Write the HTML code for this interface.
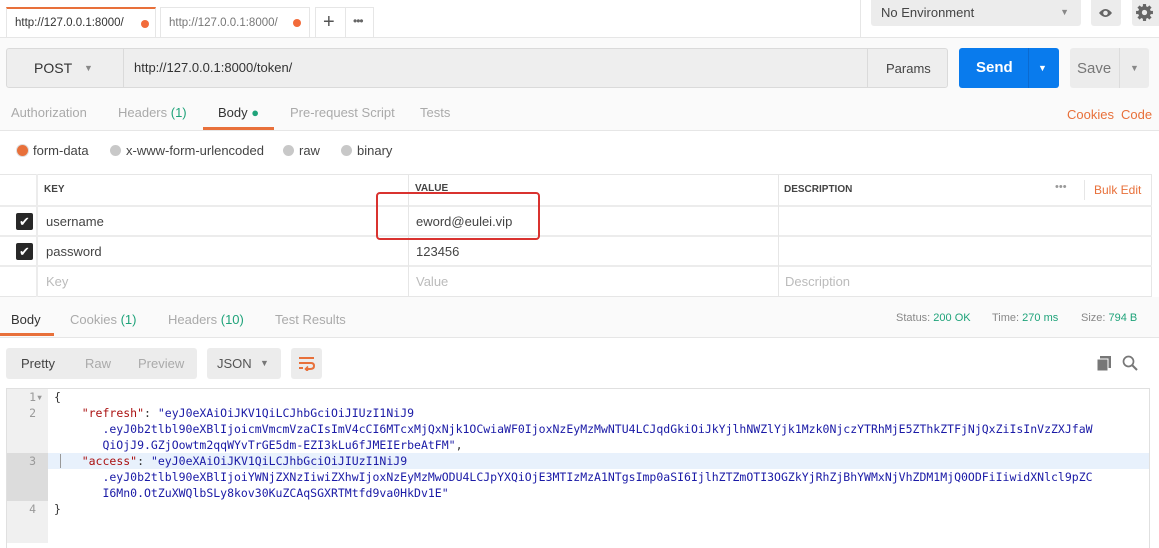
<!DOCTYPE html>
<html><head><meta charset="utf-8"><style>
*{box-sizing:border-box;margin:0;padding:0}
body{width:1159px;height:543px;overflow:hidden;background:#fff;font-family:"Liberation Sans",sans-serif;font-size:13px;color:#505050;position:relative}
.a{position:absolute}
.tab{position:absolute;top:7px;height:31px;border:1px solid #e6e6e6;border-bottom:none;background:#fff;font-size:11.5px;line-height:30px;color:#333}
.tab span.t{position:absolute;left:8px;top:0;width:115px;overflow:hidden;white-space:nowrap}
.dot{position:absolute;width:8px;height:8px;border-radius:50%;background:#f26b3a}
.gray{background:#ececec}
.mono{font-family:"DejaVu Sans Mono",monospace;font-size:11.5px;line-height:16px;white-space:pre}
.o{color:#e8703a}
.g{color:#1fa37a}
.radio{display:inline-block;width:11px;height:11px;border-radius:50%;background:#c8c8c8;vertical-align:-1px;margin-right:5px}
.cb{position:absolute;left:16px;width:17px;height:17px;background:#282828;border-radius:2px;color:#fff;font-size:13px;line-height:17px;text-align:center}
</style></head><body>
<!-- top tabs -->
<div class="tab" style="left:6px;width:150px;border-top:2px solid #e8703a"><span class="t" style="top:-1px">http://127.0.0.1:8000/</span><div class="dot" style="left:134px;top:11px"></div></div>
<div class="tab" style="left:160px;width:150px;color:#777"><span class="t">http://127.0.0.1:8000/</span><div class="dot" style="left:132px;top:11px"></div></div>
<div class="tab" style="left:315px;width:59px"><span class="a" style="left:7px;top:-1px;font-size:20px;color:#555">+</span><div class="a" style="left:29px;top:0;width:1px;height:30px;background:#e6e6e6"></div><span class="a" style="left:37px;top:-2px;font-size:12px;color:#666;letter-spacing:-1px">•••</span></div>
<div class="a" style="left:860px;top:0;width:1px;height:37px;background:#e6e6e6"></div>
<div class="a gray" style="left:871px;top:0;width:210px;height:26px;border-radius:0 0 3px 3px;font-size:13px;line-height:25px;padding-left:10px;color:#444">No Environment<span class="a" style="right:12px;top:0;font-size:9px;color:#888">▼</span></div>
<div class="a gray" style="left:1091px;top:0;width:30px;height:26px;border-radius:0 0 3px 3px"><svg class="a" style="left:7px;top:7px" width="15" height="12" viewBox="0 0 15 12"><path d="M1 6Q7.5-2 14 6Q7.5 14 1 6Z" fill="#666"/><circle cx="7.5" cy="6" r="2.3" fill="#ececec"/></svg></div>
<div class="a gray" style="left:1132px;top:0;width:27px;height:26px;border-radius:0 0 0 3px"><svg class="a" style="left:3px;top:3px" width="19" height="19" viewBox="0 0 18 18"><g fill="#666"><circle cx="9" cy="9" r="6"/><rect x="7.5" y="1" width="3" height="16"/><rect x="1" y="7.5" width="16" height="3"/><rect x="7.5" y="1" width="3" height="16" transform="rotate(45 9 9)"/><rect x="7.5" y="1" width="3" height="16" transform="rotate(-45 9 9)"/></g><circle cx="9" cy="9" r="2.5" fill="#ececec"/></svg></div>
<div class="a" style="left:0;top:37px;width:1159px;height:1px;background:#e6e6e6"></div>
<!-- request area -->
<div class="a" style="left:0;top:38px;width:1159px;height:92px;background:#fafafa"></div>
<div class="a" style="left:6px;top:48px;width:942px;height:40px;background:#eeeeee;border:1px solid #dadada;border-radius:3px"></div>
<div class="a" style="left:123px;top:49px;width:1px;height:38px;background:#dadada"></div>
<div class="a" style="left:34px;top:60px;font-size:14px;color:#333">POST</div>
<div class="a" style="left:84px;top:63px;font-size:9px;color:#888">▼</div>
<div class="a" style="left:134px;top:60px;font-size:13px;color:#333">http://127.0.0.1:8000/token/</div>
<div class="a" style="left:867px;top:49px;width:1px;height:38px;background:#dadada"></div>
<div class="a" style="left:886px;top:61px;font-size:13px;color:#444">Params</div>
<div class="a" style="left:959px;top:48px;width:100px;height:40px;background:#097bed;border-radius:3px"></div>
<div class="a" style="left:1028px;top:48px;width:1px;height:40px;background:#0a6ad0"></div>
<div class="a" style="left:976px;top:59px;font-size:15px;color:#fff;font-weight:bold">Send</div>
<div class="a" style="left:1038px;top:63px;font-size:9px;color:#fff">▼</div>
<div class="a" style="left:1070px;top:48px;width:79px;height:40px;background:#ececec;border-radius:3px"></div>
<div class="a" style="left:1119px;top:48px;width:1px;height:40px;background:#dcdcdc"></div>
<div class="a" style="left:1077px;top:60px;font-size:15px;color:#777">Save</div>
<div class="a" style="left:1130px;top:63px;font-size:9px;color:#888">▼</div>
<div class="a" style="left:11px;top:105px;font-size:13px;color:#aaa;white-space:nowrap">Authorization</div>
<div class="a" style="left:118px;top:105px;font-size:13px;color:#aaa">Headers <span class="g">(1)</span></div>
<div class="a" style="left:218px;top:105px;font-size:13px;color:#333">Body <span class="g">●</span></div>
<div class="a" style="left:290px;top:105px;font-size:13px;color:#aaa;white-space:nowrap">Pre-request Script</div>
<div class="a" style="left:420px;top:105px;font-size:13px;color:#aaa">Tests</div>
<div class="a" style="left:203px;top:127px;width:71px;height:3px;background:#e8703a"></div>
<div class="a o" style="left:1067px;top:107px;font-size:13px">Cookies</div>
<div class="a o" style="left:1121px;top:107px;font-size:13px">Code</div>
<div class="a" style="left:0;top:130px;width:1159px;height:1px;background:#e6e6e6"></div>
<div class="a" style="left:17px;top:143px;font-size:13px;color:#444;white-space:nowrap"><span class="radio" style="background:#e8703a;box-shadow:0 0 0 1px #ddd"></span>form-data</div>
<div class="a" style="left:110px;top:143px;font-size:13px;color:#444;white-space:nowrap"><span class="radio"></span>x-www-form-urlencoded</div>
<div class="a" style="left:283px;top:143px;font-size:13px;color:#444"><span class="radio"></span>raw</div>
<div class="a" style="left:341px;top:143px;font-size:13px;color:#444"><span class="radio"></span>binary</div>
<!-- table -->
<div class="a" style="left:0;top:174px;width:1152px;height:123px;border:1px solid #e6e6e6;border-left:none"></div>
<div class="a" style="left:0;top:205px;width:1152px;height:2px;background:#ececec"></div>
<div class="a" style="left:0;top:235px;width:1152px;height:2px;background:#ececec"></div>
<div class="a" style="left:0;top:265px;width:1152px;height:2px;background:#ececec"></div>
<div class="a" style="left:36px;top:174px;width:2px;height:123px;background:#ececec"></div>
<div class="a" style="left:408px;top:174px;width:1px;height:123px;background:#e6e6e6"></div>
<div class="a" style="left:778px;top:174px;width:1px;height:123px;background:#e6e6e6"></div>
<div class="a" style="left:1084px;top:180px;width:1px;height:20px;background:#e6e6e6"></div>
<div class="a" style="left:44px;top:184px;font-size:10px;font-weight:bold;color:#444">KEY</div>
<div class="a" style="left:415px;top:183px;font-size:10px;font-weight:bold;color:#444">VALUE</div>
<div class="a" style="left:784px;top:184px;font-size:10px;font-weight:bold;color:#444">DESCRIPTION</div>
<div class="a" style="left:1055px;top:181px;font-size:11px;color:#999;letter-spacing:0px">•••</div>
<div class="a o" style="left:1094px;top:183px;font-size:12px">Bulk Edit</div>
<div class="cb" style="top:213px">✔</div>
<div class="cb" style="top:243px">✔</div>
<div class="a" style="left:46px;top:214px;color:#444">username</div>
<div class="a" style="left:416px;top:214px;color:#444">eword@eulei.vip</div>
<div class="a" style="left:46px;top:244px;color:#444">password</div>
<div class="a" style="left:416px;top:244px;color:#444">123456</div>
<div class="a" style="left:46px;top:274px;color:#bbb">Key</div>
<div class="a" style="left:416px;top:274px;color:#bbb">Value</div>
<div class="a" style="left:785px;top:274px;color:#bbb">Description</div>
<div class="a" style="left:376px;top:192px;width:164px;height:48px;border:2px solid #d9322f;border-radius:4px"></div>
<!-- response -->
<div class="a" style="left:0;top:297px;width:1159px;height:40px;background:#fafafa"></div>
<div class="a" style="left:11px;top:312px;font-size:13px;color:#333">Body</div>
<div class="a" style="left:70px;top:312px;font-size:13px;color:#aaa">Cookies <span class="g">(1)</span></div>
<div class="a" style="left:168px;top:312px;font-size:13px;color:#aaa">Headers <span class="g">(10)</span></div>
<div class="a" style="left:275px;top:312px;font-size:13px;color:#aaa">Test Results</div>
<div class="a" style="left:0;top:333px;width:54px;height:3px;background:#e8703a"></div>
<div class="a" style="left:0;top:337px;width:1159px;height:1px;background:#e6e6e6"></div>
<div class="a" style="left:896px;top:312px;font-size:11px;color:#888;white-space:nowrap">Status: <span class="g">200 OK</span></div>
<div class="a" style="left:992px;top:312px;font-size:11px;color:#888;white-space:nowrap">Time: <span class="g">270 ms</span></div>
<div class="a" style="left:1081px;top:312px;font-size:11px;color:#888;white-space:nowrap">Size: <span class="g">794 B</span></div>
<div class="a gray" style="left:6px;top:348px;width:191px;height:31px;border-radius:3px;font-size:13px;line-height:31px">
<span class="a" style="left:15px;color:#444">Pretty</span><span class="a" style="left:79px;color:#aaa">Raw</span><span class="a" style="left:132px;color:#aaa">Preview</span></div>
<div class="a gray" style="left:207px;top:348px;width:74px;height:31px;border-radius:3px;font-size:13px;line-height:31px;padding-left:10px;color:#555">JSON<span class="a" style="left:53px;top:0;font-size:9px;color:#777">▼</span></div>
<div class="a gray" style="left:291px;top:348px;width:31px;height:31px;border-radius:3px"><svg class="a" style="left:7px;top:8px" width="17" height="15" viewBox="0 0 17 15"><g stroke="#e8703a" stroke-width="2" fill="none"><path d="M1 2H16M1 7H13Q16 7 16 10Q16 13 12 13H8M1 12H5"/><path d="M10 10.5L7.5 13L10 15.5" stroke-width="1.6"/></g></svg></div>
<svg class="a" style="left:1097px;top:356px" width="14" height="15" viewBox="0 0 14 15"><rect x="3" y="0" width="11" height="12" fill="#777"/><rect x="0" y="3" width="11" height="12" fill="#777" stroke="#fff" stroke-width="1"/></svg>
<svg class="a" style="left:1122px;top:355px" width="16" height="16" viewBox="0 0 16 16"><circle cx="6.5" cy="6.5" r="5" stroke="#777" stroke-width="1.7" fill="none"/><path d="M10 10L15 15" stroke="#777" stroke-width="2"/></svg>
<!-- editor -->
<div class="a" style="left:6px;top:388px;width:1144px;height:160px;border:1px solid #e0e0e0;border-bottom:none"></div>
<div class="a" style="left:7px;top:389px;width:41px;height:154px;background:#f0f0f0"></div>
<div class="a" style="left:7px;top:453px;width:41px;height:48px;background:#dcdcdc"></div>
<div class="a" style="left:48px;top:453px;width:1101px;height:16px;background:#e8f1fc"></div>
<div class="a" style="left:60px;top:454px;width:1px;height:14px;background:#999"></div>
<div class="a mono" style="left:0;top:389px;width:46px;text-align:right;color:#999;padding-right:3px">1▾
2 


3 


4 </div>
<div class="a mono" style="left:54px;top:389px;color:#333">{
    <span style="color:#a11">"refresh"</span>: <span style="color:#1a1aa6">"eyJ0eXAiOiJKV1QiLCJhbGciOiJIUzI1NiJ9
       .eyJ0b2tlbl90eXBlIjoicmVmcmVzaCIsImV4cCI6MTcxMjQxNjk1OCwiaWF0IjoxNzEyMzMwNTU4LCJqdGkiOiJkYjlhNWZlYjk1Mzk0NjczYTRhMjE5ZThkZTFjNjQxZiIsInVzZXJfaW
       QiOjJ9.GZjOowtm2qqWYvTrGE5dm-EZI3kLu6fJMEIErbeAtFM"</span>,
    <span style="color:#a11">"access"</span>: <span style="color:#1a1aa6">"eyJ0eXAiOiJKV1QiLCJhbGciOiJIUzI1NiJ9
       .eyJ0b2tlbl90eXBlIjoiYWNjZXNzIiwiZXhwIjoxNzEyMzMwODU4LCJpYXQiOjE3MTIzMzA1NTgsImp0aSI6IjlhZTZmOTI3OGZkYjRhZjBhYWMxNjVhZDM1MjQ0ODFiIiwidXNlcl9pZC
       I6Mn0.OtZuXWQlbSLy8kov30KuZCAqSGXRTMtfd9va0HkDv1E"</span>
}</div>
</body></html>
